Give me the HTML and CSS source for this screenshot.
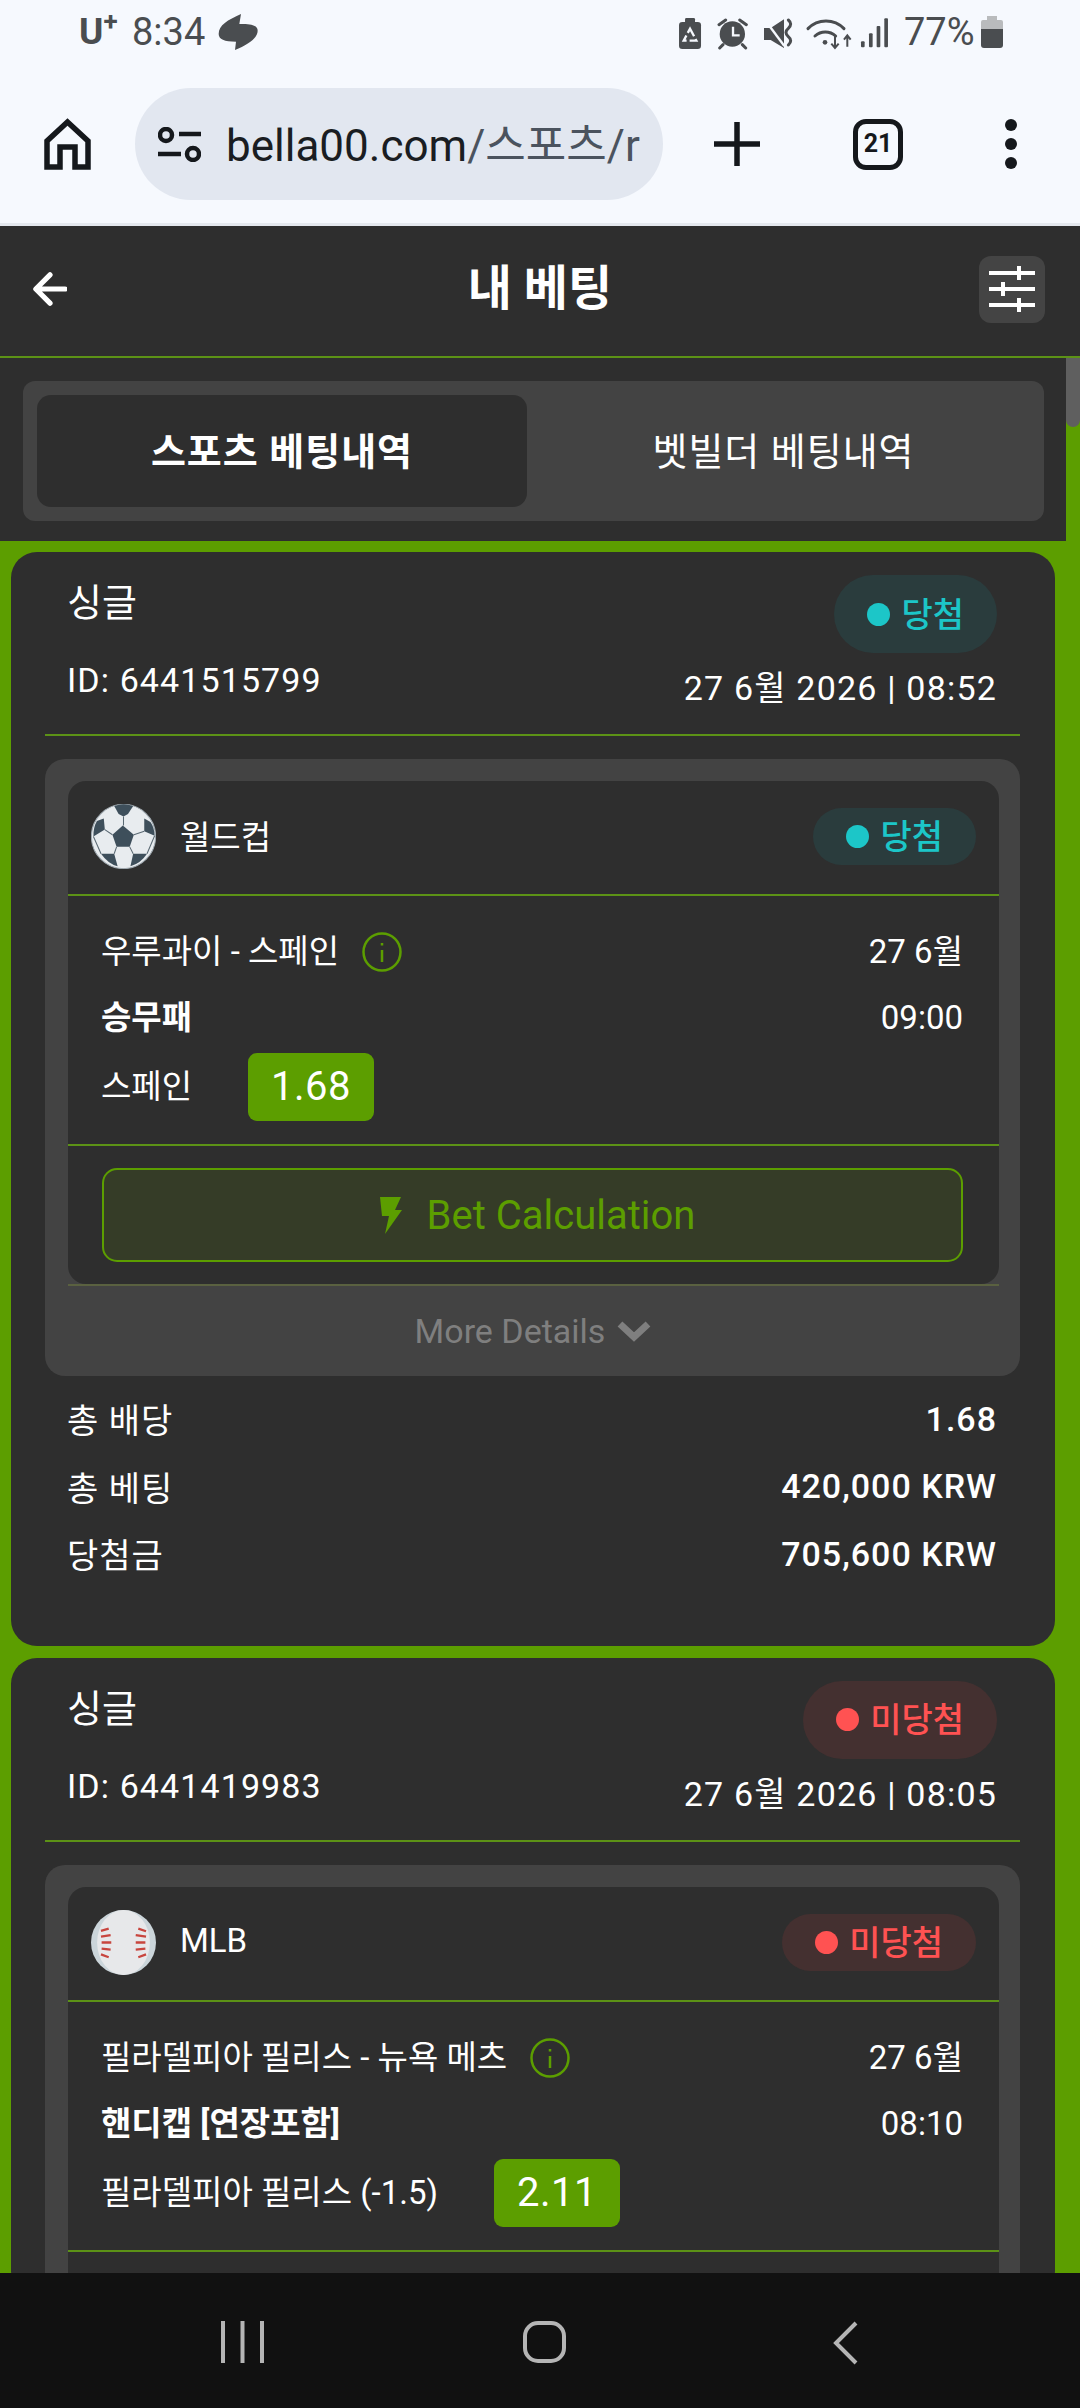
FILE: index.html
```html
<!DOCTYPE html>
<html lang="ko">
<head>
	<meta charset="UTF-8">
	<meta name="viewport" content="width=device-width, initial-scale=1">

	<title>내 베팅</title>

	<link rel="stylesheet" href="styles.css">
</head>
<body>

	<div class="status">
		<div class="status-left">
			<span class="carrier">U<sup>+</sup></span>
			<span class="clock">8:34</span>
			<svg class="blob" viewBox="470 36 132 120"><path d="M545 42C505 60 478 75 478 102C478 118 495 125 530 125L527 150C565 135 595 115 595 92C595 78 580 70 540 72Z"/></svg>
		</div>
		<div class="status-right">
			<svg class="status-icons" viewBox="60 40 630 110">
				<rect x="60" y="64" width="66" height="81" rx="10" class="fill"/>
				<rect x="78" y="52" width="30" height="16" rx="4" class="fill"/>
				<path d="M93 84L112 120H74Z" class="knock" stroke-dasharray="26 9"/>
				<circle cx="220" cy="100" r="38" class="fill"/>
				<path d="M222 78V104H242" class="knock"/>
				<path d="M180 72L200 58M262 72L242 58M192 132L182 142M250 132L260 142" class="line"/>
				<path d="M315 82H335L375 56V142L335 118H315Z" class="fill"/>
				<path d="M318 58L376 136" class="knock"/>
				<path d="M388 58q14 12 0 25q-14 12 0 25q14 12 0 25" class="line"/>
				<path d="M447 84A75 75 0 0 1 555 84M468 106A46 46 0 0 1 530 106" class="line"/>
				<circle cx="498" cy="125" r="7" class="fill"/>
				<path d="M528 106V140M517 129L528 142L539 129M565 138V106M555 117L565 104L575 117" class="thin"/>
				<rect x="606" y="122" width="11" height="18" rx="3" class="fill"/>
				<rect x="630" y="98" width="11" height="42" rx="3" class="fill"/>
				<rect x="653" y="76" width="11" height="64" rx="3" class="fill"/>
				<rect x="676" y="53" width="11" height="87" rx="3" class="fill"/>
			</svg>
			<span class="battery-pct">77%</span>
			<svg class="battery" viewBox="0 0 22 32">
				<path d="M6 0H16V4H20Q22 4 22 6V13H0V6Q0 4 2 4H6Z" fill="#b9bbbd"/>
				<path d="M0 13H22V29Q22 32 19 32H3Q0 32 0 29Z" fill="#4a4d50"/>
			</svg>
		</div>
	</div>

	<div class="toolbar">
		<svg class="home" viewBox="0 0 47 52"><path d="M23.5 4L44 23V49H31V29H16V49H3V23Z"/></svg>
		<div class="url-pill">
			<svg class="site-icon" viewBox="0 0 43 35"><circle cx="8" cy="8" r="6"/><path d="M21 7H43M0 27H23"/><circle cx="35" cy="27" r="6"/></svg>
			<div class="url">bella00.com<span class="url-path">/스포츠/r</span></div>
		</div>
		<div class="toolbar-btns">
			<svg class="plus" viewBox="0 0 46 44"><path d="M23 0V44M0 22H46"/></svg>
			<div class="tab-count">21</div>
			<div class="dots"><i></i><i></i><i></i></div>
		</div>
	</div>

	<div class="view">
		<div class="header">
			<svg class="back" viewBox="0 0 36 34"><path d="M34 17H4M18 2L3 17L18 32"/></svg>
			<h1>내 베팅</h1>
			<div class="filter-btn">
				<svg viewBox="0 0 46 46"><path d="M0 7H46M0 23H46M0 39H46"/><path class="knob" d="M30 0V14M14 16V30M30 32V46"/></svg>
			</div>
		</div>

		<div class="scroll-wrap">
			<div class="scroll">
				<div class="tabs-section">
					<div class="tabs">
						<div class="tab active">스포츠 베팅내역</div>
						<div class="tab">벳빌더 베팅내역</div>
					</div>
				</div>

				<div class="list">

					<div class="card">
						<div class="card-head">
							<div class="card-left">
								<div class="card-type">싱글</div>
								<div class="card-id">ID: 6441515799</div>
							</div>
							<div class="card-right">
								<div class="badge won big"><i></i>당첨</div>
								<div class="card-date">27 6월 2026 | 08:52</div>
							</div>
						</div>

						<div class="box">
							<div class="event">
								<div class="league">
									<div class="league-name">
										<svg class="sport" viewBox="68 46 188 188">
											<circle cx="162" cy="140" r="93" fill="#e8ecef" stroke="#9fa9b0" stroke-width="3"/>
											<g fill="#3e4f5b">
												<path d="M160 108L192 135L180 170H142L130 135Z"/>
												<path d="M135 52Q162 42 190 52L175 75L162 82L148 75Z"/>
												<path d="M85 95L105 88L108 120L75 140Q74 115 85 95Z"/>
												<path d="M222 88L240 98Q252 115 252 138L222 125Z"/>
												<path d="M97 190H135L145 226Q118 220 97 190Z"/>
												<path d="M190 190H230Q212 218 182 226Z"/>
											</g>
											<path d="M162 82V108M108 120L130 135M222 125L192 135M142 170L135 190M180 170L190 190M75 140L97 190M252 138L230 190" stroke="#5a6973" stroke-width="3" fill="none"/>
										</svg>
										<span>월드컵</span>
									</div>
									<div class="badge won"><i></i>당첨</div>
								</div>
								<div class="selection">
									<div class="sel-row">
										<div class="match">우루과이 - 스페인
											<svg class="info" viewBox="0 0 40 40"><circle cx="20" cy="20" r="18.5"/><path d="M20 18V30M20 11V13.5"/></svg>
										</div>
										<div>27 6월</div>
									</div>
									<div class="sel-row">
										<div class="market">승무패</div>
										<div>09:00</div>
									</div>
									<div class="pick-row">
										<div>스페인</div>
										<div class="odds">1.68</div>
									</div>
								</div>
								<div class="calc">
									<div class="calc-btn">
										<svg class="bolt" viewBox="0 0 22 37"><path d="M0 0H21L15 13H22L5 37L9 19H2Z"/></svg>
										Bet Calculation
									</div>
								</div>
							</div>
							<div class="more">More Details
								<svg class="chev" viewBox="0 0 36 22"><path d="M4 4L18 17L32 4"/></svg>
							</div>
						</div>

						<div class="totals">
							<div class="total-row"><div>총 배당</div><b>1.68</b></div>
							<div class="total-row"><div>총 베팅</div><b>420,000 KRW</b></div>
							<div class="total-row"><div>당첨금</div><b>705,600 KRW</b></div>
						</div>
					</div>

					<div class="card">
						<div class="card-head">
							<div class="card-left">
								<div class="card-type">싱글</div>
								<div class="card-id">ID: 6441419983</div>
							</div>
							<div class="card-right">
								<div class="badge lost big"><i></i>미당첨</div>
								<div class="card-date">27 6월 2026 | 08:05</div>
							</div>
						</div>

						<div class="box">
							<div class="event">
								<div class="league">
									<div class="league-name">
										<svg class="sport" viewBox="61 27 202 202">
											<circle cx="162" cy="128" r="101" fill="#cbd5da"/>
											<ellipse cx="162" cy="128" rx="82" ry="101" fill="#e7e8ea"/>
											<path d="M92 92L116 85M92 110L122 105M94 128H124M94 147L122 150M92 165L116 174M208 85L232 93M200 105L232 110M200 128H230M200 150L230 147M208 174L232 165" stroke="#c8453e" stroke-width="7" fill="none"/>
										</svg>
										<span>MLB</span>
									</div>
									<div class="badge lost"><i></i>미당첨</div>
								</div>
								<div class="selection">
									<div class="sel-row">
										<div class="match">필라델피아 필리스 - 뉴욕 메츠
											<svg class="info" viewBox="0 0 40 40"><circle cx="20" cy="20" r="18.5"/><path d="M20 18V30M20 11V13.5"/></svg>
										</div>
										<div>27 6월</div>
									</div>
									<div class="sel-row">
										<div class="market">핸디캡 [연장포함]</div>
										<div>08:10</div>
									</div>
									<div class="pick-row">
										<div>필라델피아 필리스 (-1.5)</div>
										<div class="odds">2.11</div>
									</div>
								</div>
								<div class="calc-rest"></div>
							</div>
						</div>
					</div>

				</div>
			</div>
			<div class="scrollbar"><div class="thumb"></div></div>
		</div>
	</div>

	<div class="navbar">
		<svg class="nav-recent" viewBox="0 0 43 42"><path d="M2 0V42M21.5 0V42M41 0V42"/></svg>
		<svg class="nav-home" viewBox="0 0 43 42"><rect x="2" y="2" width="39" height="38" rx="13"/></svg>
		<svg class="nav-back" viewBox="0 0 25 44"><path d="M23 2L3 22L23 42"/></svg>
	</div>

</body>
</html>
```

FILE: styles.css
```css
* {
	box-sizing: border-box;
}

html, body {
	margin: 0;
	height: 100%;
}

body {
	width: 1080px;
	height: 2408px;
	display: flex;
	flex-direction: column;
	overflow: hidden;
	font-family: Roboto, "Noto Sans CJK KR", sans-serif;
	background: #2e2e2e;
	color: #fff;
}

/* status bar */
.status {
	height: 64px;
	flex: none;
	display: flex;
	justify-content: space-between;
	padding: 10px 77px 0 79px;
	background: #f6f9fe;
	color: #4a4d50;
	font-size: 38px;
	line-height: 44px;
}

.status-left, .status-right {
	display: flex;
	align-items: center;
	height: 44px;
}

.carrier {
	font-weight: 700;
	font-size: 37px;
	width: 53px;
}

.carrier sup {
	font-size: 26px;
	line-height: 0;
	vertical-align: 14px;
}

.blob {
	width: 44px;
	height: 40px;
	margin-left: 11px;
	fill: #4a4d50;
}

.status-icons {
	width: 210px;
	height: 36.67px;
}

.status-icons .fill {
	fill: #4a4d50;
}

.status-icons .knock {
	fill: none;
	stroke: #f6f9fe;
	stroke-width: 7;
}

.status-icons .line {
	fill: none;
	stroke: #4a4d50;
	stroke-width: 9;
	stroke-linecap: round;
}

.status-icons .thin {
	fill: none;
	stroke: #4a4d50;
	stroke-width: 6;
}

.battery-pct {
	margin-left: 15px;
	width: 77px;
}

.battery {
	width: 22px;
	height: 32px;
}

/* browser toolbar */
.toolbar {
	height: 162px;
	flex: none;
	display: flex;
	align-items: flex-start;
	padding: 24px 0 0 44px;
	background: #f6f9fe;
	border-bottom: 3px solid #e4e8ee;
}

.home {
	width: 47px;
	height: 52px;
	margin: 30px 44px 0 0;
	fill: none;
	stroke: #15181c;
	stroke-width: 5.5;
}

.url-pill {
	width: 528px;
	height: 112px;
	flex: none;
	display: flex;
	align-items: center;
	gap: 25px;
	padding: 0 20px 0 23px;
	border-radius: 56px;
	background: #e2e7f0;
	overflow: hidden;
}

.site-icon {
	width: 43px;
	height: 35px;
	flex: none;
	fill: none;
	stroke: #15181c;
	stroke-width: 4.5;
}

.url {
	flex: 1;
	white-space: nowrap;
	padding-bottom: 4px;
	font-size: 44px;
	color: #1a1d22;
}

.url-path {
	color: #4b535e;
}

.toolbar-btns {
	display: flex;
	align-items: center;
	height: 112px;
}

.plus {
	width: 46px;
	height: 44px;
	margin-left: 51px;
	fill: none;
	stroke: #15181c;
	stroke-width: 5.5;
}

.tab-count {
	width: 50px;
	height: 51px;
	margin-left: 93px;
	border: 5.5px solid #15181c;
	border-radius: 13px;
	color: #15181c;
	font-size: 25px;
	font-weight: 700;
	line-height: 39px;
	text-align: center;
}

.dots {
	display: flex;
	flex-direction: column;
	gap: 7px;
	margin-left: 102px;
}

.dots i {
	width: 12px;
	height: 12px;
	border-radius: 50%;
	background: #15181c;
}

/* page */
.view {
	flex: 1;
	min-height: 0;
	display: flex;
	flex-direction: column;
	overflow: hidden;
}

.header {
	height: 132px;
	flex: none;
	display: flex;
	align-items: center;
	justify-content: space-between;
	padding: 0 35px 4px 33px;
	background: #2e2e2e;
	border-bottom: 2px solid #5c9216;
}

.back {
	width: 34px;
	height: 34px;
	fill: none;
	stroke: #fff;
	stroke-width: 5.5;
	stroke-linecap: round;
	stroke-linejoin: round;
}

.header h1 {
	margin: 0 0 0 34px;
	font-size: 48px;
	font-weight: 700;
	line-height: 60px;
}

.filter-btn {
	width: 66px;
	height: 67px;
	display: flex;
	align-items: center;
	justify-content: center;
	border-radius: 12px;
	background: #444;
}

.filter-btn svg {
	width: 46px;
	height: 46px;
	fill: none;
	stroke: #fff;
	stroke-width: 4;
}

.scroll-wrap {
	flex: 1;
	min-height: 0;
	display: flex;
}

.scroll {
	flex: 1;
	min-width: 0;
}

.scrollbar {
	width: 14px;
	flex: none;
	background: #5c9e00;
}

.thumb {
	height: 69px;
	border-radius: 0 0 7px 7px;
	background: #5f5f5f;
}

/* tabs */
.tabs-section {
	height: 183px;
	padding: 23px 22px 20px 23px;
	background: #2e2e2e;
}

.tabs {
	height: 140px;
	display: flex;
	padding: 14px 4px 14px 14px;
	border-radius: 12px;
	background: #434343;
}

.tab {
	flex: 1;
	display: flex;
	align-items: center;
	justify-content: center;
	padding-bottom: 5px;
	font-size: 38px;
	letter-spacing: 1px;
}

.tab.active {
	flex: none;
	width: 490px;
	border-radius: 14px;
	background: #2e2e2e;
	font-weight: 700;
}

/* bets */
.list {
	display: flex;
	flex-direction: column;
	gap: 12px;
	padding: 11px;
	background: #5c9e00;
}

.card {
	flex: none;
	padding: 0 35px 0 34px;
	border-radius: 26px;
	background: #2e2e2e;
}

.card-head {
	display: flex;
	justify-content: space-between;
	height: 184px;
	padding: 23px 23px 24px 22px;
	border-bottom: 2px solid #5c9216;
}

.card-type {
	margin-top: 6px;
	font-size: 38px;
	line-height: 44px;
}

.card-id {
	margin-top: 33px;
	font-size: 34px;
	line-height: 44px;
	letter-spacing: 1.1px;
}

.card-right {
	display: flex;
	flex-direction: column;
	align-items: flex-end;
}

.card-date {
	margin-top: 13px;
	font-size: 34px;
	line-height: 44px;
	letter-spacing: 1.2px;
}

.badge {
	height: 57px;
	display: flex;
	align-items: center;
	gap: 11px;
	padding: 0 33px 4px;
	border-radius: 29px;
	font-size: 34px;
	font-weight: 500;
}

.badge.big {
	height: 78px;
	border-radius: 39px;
}

.badge i {
	width: 23px;
	height: 23px;
	margin-top: 4px;
	border-radius: 50%;
	background: currentColor;
}

.badge.won {
	background: #2a3c3d;
	color: #1cc6c8;
}

.badge.lost {
	background: #443030;
	color: #ff5252;
}

.box {
	margin-top: 23px;
	padding: 22px 21px 0 23px;
	border-radius: 20px;
	background: #434343;
}

.event {
	border-radius: 18px;
	background: #2e2e2e;
}

.league {
	height: 115px;
	display: flex;
	align-items: center;
	justify-content: space-between;
	padding: 0 23px 2px 23px;
	border-bottom: 2px solid #5c9216;
}

.league-name {
	display: flex;
	align-items: center;
	gap: 24px;
	font-size: 33px;
}

.league-name span {
	padding-bottom: 4px;
}

.sport {
	width: 65px;
	height: 65px;
}

.selection {
	padding: 34px 36px 23px 33px;
	border-bottom: 2px solid #5c9216;
	font-size: 33px;
	line-height: 44px;
}

.sel-row {
	display: flex;
	justify-content: space-between;
	margin-bottom: 22px;
}

.match {
	display: flex;
	align-items: center;
	gap: 23px;
}

.info {
	width: 40px;
	height: 40px;
	fill: none;
	stroke: #5c9e00;
	stroke-width: 2.5;
}

.market {
	font-weight: 700;
}

.pick-row {
	display: flex;
	align-items: center;
	margin-top: -9px;
	height: 68px;
}

.odds {
	width: 126px;
	height: 68px;
	margin-left: 56px;
	border-radius: 9px;
	background: #5c9e00;
	font-size: 40px;
	line-height: 68px;
	text-align: center;
	letter-spacing: 0.5px;
}

.calc {
	padding: 22px 36px 22px 34px;
}

.calc-rest {
	height: 44px;
}

.calc-btn {
	height: 94px;
	display: flex;
	align-items: center;
	justify-content: center;
	gap: 25px;
	padding-left: 10px;
	border: 2px solid #5c9e00;
	border-radius: 15px;
	background: #353c27;
	color: #5c9e00;
	font-size: 40px;
}

.bolt {
	width: 22px;
	height: 37px;
	fill: #5c9e00;
}

.more {
	height: 92px;
	display: flex;
	align-items: center;
	justify-content: center;
	gap: 11px;
	border-top: 2px solid #5a6140;
	color: #7f7f7f;
	font-size: 34px;
}

.chev {
	width: 36px;
	height: 22px;
	fill: none;
	stroke: #7f7f7f;
	stroke-width: 7;
}

.totals {
	padding: 9px 23px 58px 22px;
	font-size: 34px;
	letter-spacing: 1px;
}

.total-row {
	display: flex;
	justify-content: space-between;
	align-items: center;
	height: 67.5px;
}

.total-row b {
	font-weight: 500;
}

/* android nav */
.navbar {
	height: 135px;
	flex: none;
	display: flex;
	align-items: flex-start;
	padding: 48px 0 0 221px;
	background: #111;
}

.navbar svg {
	fill: none;
	stroke: #b5b5b5;
	stroke-width: 4;
}

.nav-recent, .nav-home {
	width: 43px;
	height: 42px;
}

.nav-home {
	margin-left: 259px;
}

.nav-back {
	width: 25px;
	height: 44px;
	margin-left: 267px;
}
```
